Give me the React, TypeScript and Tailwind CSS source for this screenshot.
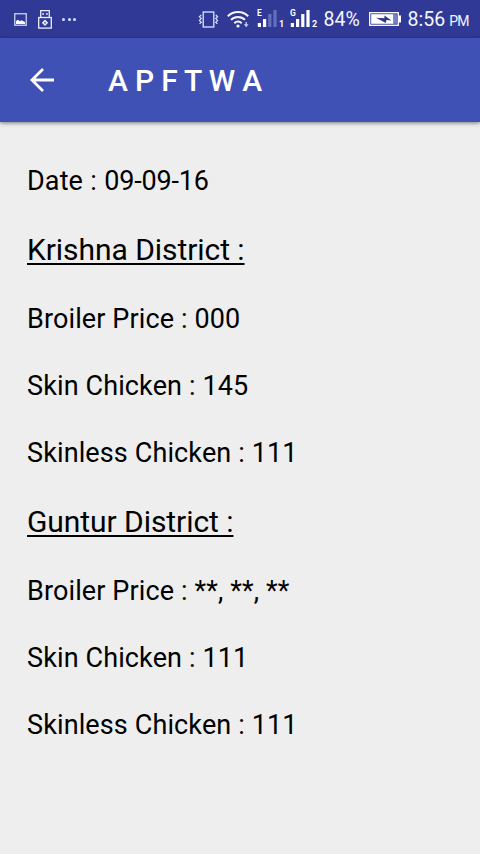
type District = {
  name: string
  prices: { label: string; value: string }[]
}

const districts: District[] = [
  {
    name: "Krishna District :",
    prices: [
      { label: "Broiler Price", value: "000" },
      { label: "Skin Chicken", value: "145" },
      { label: "Skinless Chicken", value: "111" },
    ],
  },
  {
    name: "Guntur District :",
    prices: [
      { label: "Broiler Price", value: "**, **, **" },
      { label: "Skin Chicken", value: "111" },
      { label: "Skinless Chicken", value: "111" },
    ],
  },
]

const PictureIcon = () => (
  <svg width="13" height="13" viewBox="0 0 13 13" fill="none">
    <rect x="0.75" y="0.75" width="11.5" height="11.5" stroke="#c9d3f5" strokeWidth="1.3" />
    <path d="M2 11V8L4 6.8L6 8.2L7.5 7.2L11 9V11Z" fill="#fff" />
  </svg>
)

const UsbIcon = () => (
  <svg width="14" height="19" viewBox="0 0 14 19" fill="none" stroke="#e8edff" strokeWidth="1.3">
    <path d="M2.7 7.5V0.7H11.3V7.5" />
    <rect x="0.7" y="7.5" width="12.6" height="10.6" />
    <path d="M4.2 4H6M8 4H9.8" />
    <path d="M7 9.6L10.2 12.8L7 16L3.8 12.8Z" fill="#e8edff" stroke="none" />
    <path d="M6.2 12.8H7.8" stroke="#303a94" />
  </svg>
)

const VibrateIcon = () => (
  <svg width="21" height="17" viewBox="0 0 21 17" fill="none" stroke="#dfe5ff" strokeWidth="1.3">
    <rect x="5.2" y="1" width="10.6" height="15" />
    <path d="M3.2 4L1.4 5.8L3.2 7.6L1.4 9.4L3.2 11.2L1.6 12.8" strokeWidth="1.2" />
    <path d="M17.8 4L19.6 5.8L17.8 7.6L19.6 9.4L17.8 11.2L19.4 12.8" strokeWidth="1.2" />
  </svg>
)

const WifiIcon = () => (
  <svg width="23" height="17" viewBox="0 0 23 17" fill="none" stroke="#f4f7ff" strokeWidth="2">
    <path d="M0.8 5.2C6.5 -0.3 15.5 -0.3 21.2 5.2" />
    <path d="M4 8.9C8 5 14 5 18 8.9" />
    <path d="M7.3 12.2C9.5 10.2 12.5 10.2 14.7 12.2" />
    <circle cx="11" cy="15" r="1.6" fill="#f4f7ff" stroke="none" />
    <path d="M18.5 11V13.2H16.8L19.2 16.2L21.6 13.2H19.9V11Z" fill="#c3ccf5" stroke="none" />
  </svg>
)

const SignalIcon = ({ network, sim, level }: { network: string; sim: number; level: number }) => (
  <svg width="28" height="20" viewBox="0 0 28 20" fill="#fff" className="font-[Roboto,sans-serif]">
    <text x="0" y="7" fontSize="8.5" fontWeight="700">
      {network}
    </text>
    {[4, 8, 13, 17].map((height, i) => (
      <rect
        key={height}
        x={0.8 + i * 5.2}
        y={18 - height}
        width="3.2"
        height={height}
        fill={i < level ? "#fff" : "#6470bd"}
      />
    ))}
    <text x="22" y="18" fontSize="9" fontWeight="700">
      {sim}
    </text>
  </svg>
)

const BatteryIcon = () => (
  <svg width="32" height="14" viewBox="0 0 32 14" fill="none">
    <rect x="0.7" y="0.7" width="28.6" height="12.6" stroke="#fff" strokeWidth="1.3" />
    <path d="M2.2 2.2H24.5V11.8H2.2Z" fill="#fff" />
    <path d="M24.5 2.2H28V11.8H24.5Z" fill="#7782bd" />
    <path d="M30 3.5H32V10.5H30Z" fill="#fff" />
    <path d="M7 5.8L15.3 6.2L15.5 3.5L22.5 8.4L17.5 8L16.8 11Z" fill="#303a80" />
  </svg>
)

const StatusBar = () => (
  <div className="flex h-[38px] items-center bg-[#303a96] text-[#f4f7ff]">
    <div className="flex items-center pl-[14px]">
      <PictureIcon />
      <div className="ml-[11px]">
        <UsbIcon />
      </div>
      <div className="ml-[10px] flex gap-[2.5px]">
        <span className="size-[3px] rounded-full bg-[#dbe2ff]" />
        <span className="size-[3px] rounded-full bg-[#dbe2ff]" />
        <span className="size-[3px] rounded-full bg-[#dbe2ff]" />
      </div>
    </div>
    <div className="ml-auto flex items-center pr-[11px]">
      <VibrateIcon />
      <div className="ml-[8px]">
        <WifiIcon />
      </div>
      <div className="ml-[7px]">
        <SignalIcon network="E" sim={1} level={2} />
      </div>
      <div className="ml-[5px]">
        <SignalIcon network="G" sim={2} level={4} />
      </div>
      <span className="mt-[2px] ml-[6px] w-[37px] text-[19.5px] whitespace-nowrap">84%</span>
      <div className="ml-[8px]">
        <BatteryIcon />
      </div>
      <span className="mt-[2px] ml-[7px] flex items-baseline whitespace-nowrap">
        <span className="text-[19.5px]">8:56</span>
        <span className="ml-[4px] text-[14px] tracking-[-0.6px]">PM</span>
      </span>
    </div>
  </div>
)

const AppBar = () => (
  <header className="flex h-[84px] items-center bg-[#3f51b5] pl-[30px] text-white shadow-[0_1px_4px_rgba(0,0,0,0.5)]">
    <button aria-label="Back">
      <svg width="24" height="24" viewBox="0 0 24 24" fill="none" stroke="currentColor" strokeWidth="2.8">
        <path d="M24 12H2.5M13 1L2 12L13 23" />
      </svg>
    </button>
    <h1 className="ml-[54px] text-[30px] font-medium tracking-[-0.2px]">A P F T W A</h1>
  </header>
)

export default function App() {
  return (
    <div className="flex h-screen flex-col overflow-hidden bg-[#eeeeee] font-[Roboto,sans-serif] text-black">
      <StatusBar />
      <AppBar />
      <main className="flex flex-col gap-[35px] px-[27px] pt-[43px] text-[27px] leading-[32px] tracking-[0.12px]">
        <p className="[word-spacing:0.5px]">
          Date : <span className="tracking-[-0.2px]">09-09-16</span>
        </p>
        {districts.map((district) => (
          <section key={district.name} className="flex flex-col gap-[35px]">
            <h2 className="text-[30px] leading-[36px] tracking-[-0.06px] underline decoration-[1.5px] underline-offset-[3px]">
              {district.name}
            </h2>
            {district.prices.map((price) => (
              <p key={price.label}>
                {price.label} : {price.value}
              </p>
            ))}
          </section>
        ))}
      </main>
    </div>
  )
}
